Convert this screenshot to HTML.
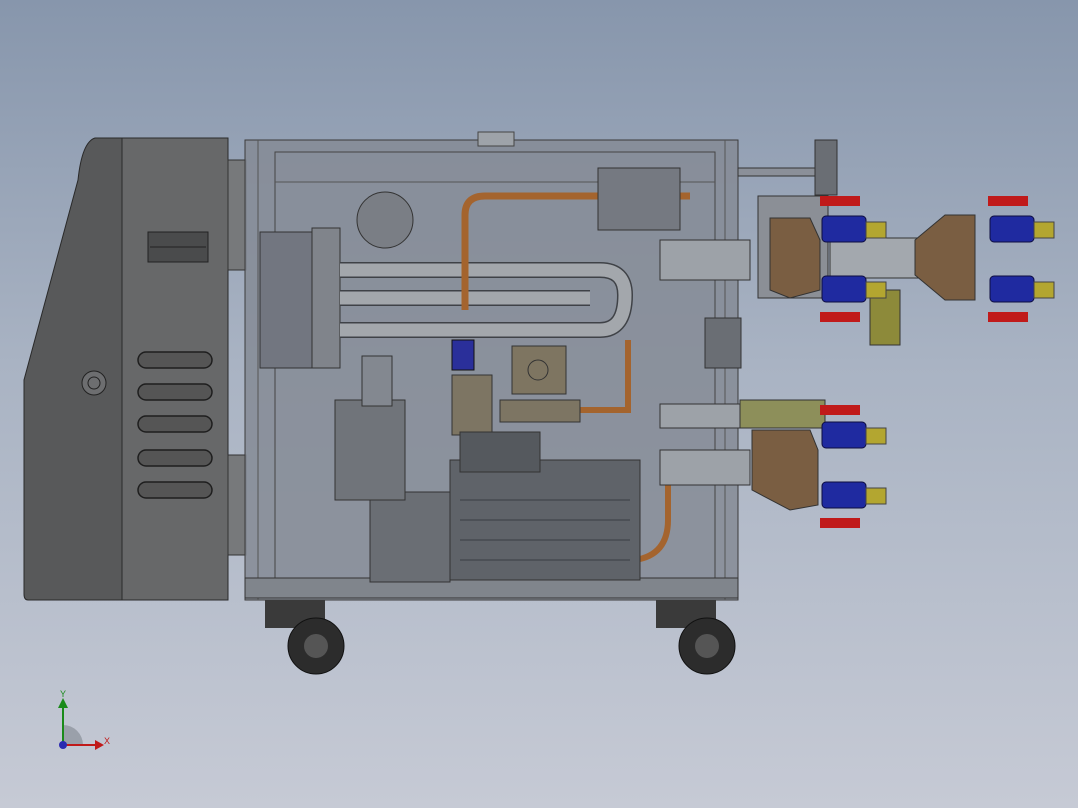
<!DOCTYPE html>
<html><head><style>
html,body{margin:0;padding:0;width:1078px;height:808px;overflow:hidden}
body{background:linear-gradient(#8796ac 0%,#a9b3c3 45%,#c6cad5 100%);font-family:"Liberation Sans",sans-serif}
svg{position:absolute;left:0;top:0}
</style></head><body>
<svg width="1078" height="808" viewBox="0 0 1078 808">
<!-- left control box -->
<path d="M95 138 L122 138 L122 600 L28 600 Q24 600 24 594 L24 380 L78 180 Q82 142 95 138Z" fill="#58595a" stroke="#2a2a2a"/>
<rect x="122" y="138" width="106" height="462" fill="#676869" stroke="#2a2a2a"/>
<rect x="228" y="160" width="18" height="110" fill="#77797b" stroke="#333"/>
<rect x="228" y="455" width="18" height="100" fill="#77797b" stroke="#333"/>
<rect x="148" y="232" width="60" height="30" fill="#4a4b4c" stroke="#222"/>
<line x1="150" y1="247" x2="206" y2="247" stroke="#222"/>
<circle cx="94" cy="383" r="12" fill="#6d6e70" stroke="#222"/>
<circle cx="94" cy="383" r="6" fill="none" stroke="#222"/>
<g fill="#555" stroke="#1e1e1e" stroke-width="1.5">
<rect x="138" y="352" width="74" height="16" rx="8"/>
<rect x="138" y="384" width="74" height="16" rx="8"/>
<rect x="138" y="416" width="74" height="16" rx="8"/>
<rect x="138" y="450" width="74" height="16" rx="8"/>
<rect x="138" y="482" width="74" height="16" rx="8"/>
</g>
<!-- main frame -->
<rect x="245" y="140" width="493" height="460" fill="#858b95" fill-opacity="0.85" stroke="#3b3b3b"/>
<rect x="275" y="152" width="440" height="428" fill="none" stroke="#444"/>
<line x1="275" y1="182" x2="715" y2="182" stroke="#555"/>
<line x1="258" y1="140" x2="258" y2="600" stroke="#555"/>
<line x1="725" y1="140" x2="725" y2="600" stroke="#555"/>
<rect x="478" y="132" width="36" height="14" fill="#9ea3a9" stroke="#444"/>
<rect x="245" y="578" width="493" height="20" fill="#80858c" stroke="#333"/>
<!-- cylinder left -->
<rect x="260" y="232" width="60" height="136" fill="#727680" stroke="#333"/>
<rect x="312" y="228" width="28" height="140" fill="#80848b" stroke="#333"/>
<!-- heater pipes -->
<g fill="none" stroke="#3f4247" stroke-width="16">
<path d="M340 270 L600 270 Q625 270 625 295 Q625 330 600 330 L340 330"/>
<path d="M340 298 L590 298"/>
</g>
<g fill="none" stroke="#a3a7ac" stroke-width="13">
<path d="M340 270 L600 270 Q625 270 625 295 Q625 330 600 330 L340 330"/>
<path d="M340 298 L590 298"/>
</g>
<!-- copper pipe -->
<path d="M465 310 L465 215 Q465 196 485 196 L690 196" fill="none" stroke="#a4642e" stroke-width="7"/>
<path d="M580 410 L628 410 L628 340" fill="none" stroke="#a4642e" stroke-width="6"/>
<path d="M668 455 L668 520 Q668 555 635 560" fill="none" stroke="#a4642e" stroke-width="6"/>
<rect x="598" y="168" width="82" height="62" fill="#757981" stroke="#333"/>
<circle cx="385" cy="220" r="28" fill="#7a7e85" stroke="#333"/>
<rect x="512" y="346" width="54" height="48" fill="#7e7561" stroke="#333"/>
<circle cx="538" cy="370" r="10" fill="none" stroke="#333"/>
<rect x="452" y="340" width="22" height="30" fill="#2a2f9a" stroke="#111"/>
<rect x="452" y="375" width="40" height="60" fill="#7d7563" stroke="#333"/>
<rect x="500" y="400" width="80" height="22" fill="#7d7563" stroke="#333"/>
<!-- motor -->
<rect x="370" y="492" width="80" height="90" fill="#6a6e74" stroke="#333"/>
<rect x="450" y="460" width="190" height="120" fill="#5f6369" stroke="#333"/>
<g stroke="#3a3d42"><line x1="460" y1="500" x2="630" y2="500"/><line x1="460" y1="520" x2="630" y2="520"/><line x1="460" y1="540" x2="630" y2="540"/><line x1="460" y1="560" x2="630" y2="560"/></g>
<rect x="460" y="432" width="80" height="40" fill="#55595e" stroke="#333"/>
<rect x="335" y="400" width="70" height="100" fill="#70747a" stroke="#333"/>
<rect x="362" y="356" width="30" height="50" fill="#838890" stroke="#333"/>
<rect x="660" y="450" width="90" height="35" fill="#9da2a8" stroke="#333"/>
<rect x="660" y="404" width="90" height="24" fill="#9da2a8" stroke="#333"/>
<rect x="660" y="240" width="90" height="40" fill="#9da2a8" stroke="#333"/>
<rect x="705" y="318" width="36" height="50" fill="#6a6e74" stroke="#333"/>
<!-- right side -->
<rect x="738" y="168" width="80" height="8" fill="#8b9099" stroke="#333"/>
<rect x="758" y="196" width="70" height="102" fill="#8b8f96" stroke="#333"/>
<path d="M770 218 L810 218 L820 240 L820 290 L790 298 L770 290Z" fill="#7a5e42" stroke="#333"/>
<rect x="815" y="140" width="22" height="55" fill="#6a6e74" stroke="#333"/>
<rect x="830" y="238" width="110" height="40" fill="#a3a8ae" stroke="#333"/>
<path d="M915 240 L945 215 L975 215 L975 300 L945 300 L915 275Z" fill="#7a5e42" stroke="#333"/>
<path d="M752 430 L810 430 L818 450 L818 505 L790 510 L752 490Z" fill="#7a5e42" stroke="#333"/>
<rect x="740" y="400" width="85" height="28" fill="#8d8f5a" stroke="#333"/>
<rect x="870" y="290" width="30" height="55" fill="#8d8a3a" stroke="#333"/>
<g fill="#1f2aa0" stroke="#0d0d40">
<rect x="822" y="216" width="44" height="26" rx="4"/>
<rect x="822" y="276" width="44" height="26" rx="4"/>
<rect x="990" y="216" width="44" height="26" rx="4"/>
<rect x="990" y="276" width="44" height="26" rx="4"/>
<rect x="822" y="422" width="44" height="26" rx="4"/>
<rect x="822" y="482" width="44" height="26" rx="4"/>
</g>
<g fill="#b3a630" stroke="#444">
<rect x="866" y="222" width="20" height="16"/><rect x="866" y="282" width="20" height="16"/>
<rect x="1034" y="222" width="20" height="16"/><rect x="1034" y="282" width="20" height="16"/>
<rect x="866" y="428" width="20" height="16"/><rect x="866" y="488" width="20" height="16"/>
</g>
<g fill="#c01a1a">
<rect x="820" y="196" width="40" height="10"/><rect x="820" y="312" width="40" height="10"/>
<rect x="988" y="196" width="40" height="10"/><rect x="988" y="312" width="40" height="10"/>
<rect x="820" y="405" width="40" height="10"/><rect x="820" y="518" width="40" height="10"/>
</g>
<!-- wheels -->
<g>
<rect x="265" y="600" width="60" height="28" fill="#3a3a3a"/>
<circle cx="316" cy="646" r="28" fill="#2c2c2c" stroke="#111"/>
<circle cx="316" cy="646" r="12" fill="#555"/>
<rect x="656" y="600" width="60" height="28" fill="#3a3a3a"/>
<circle cx="707" cy="646" r="28" fill="#2c2c2c" stroke="#111"/>
<circle cx="707" cy="646" r="12" fill="#555"/>
</g>
<!-- axis triad -->
<path d="M63 745 L63 725 A20 20 0 0 1 83 745Z" fill="#9aa0aa"/>
<line x1="63" y1="745" x2="63" y2="705" stroke="#1a8a1a" stroke-width="2"/>
<path d="M58 708 L63 698 L68 708Z" fill="#1a8a1a"/>
<line x1="63" y1="745" x2="98" y2="745" stroke="#c01a1a" stroke-width="2"/>
<path d="M95 740 L104 745 L95 750Z" fill="#c01a1a"/>
<circle cx="63" cy="745" r="4" fill="#2a2ab0"/>
<text x="60" y="697" font-size="9" fill="#1a8a1a">Y</text>
<text x="104" y="744" font-size="9" fill="#c01a1a">X</text>
</svg>
</body></html>
